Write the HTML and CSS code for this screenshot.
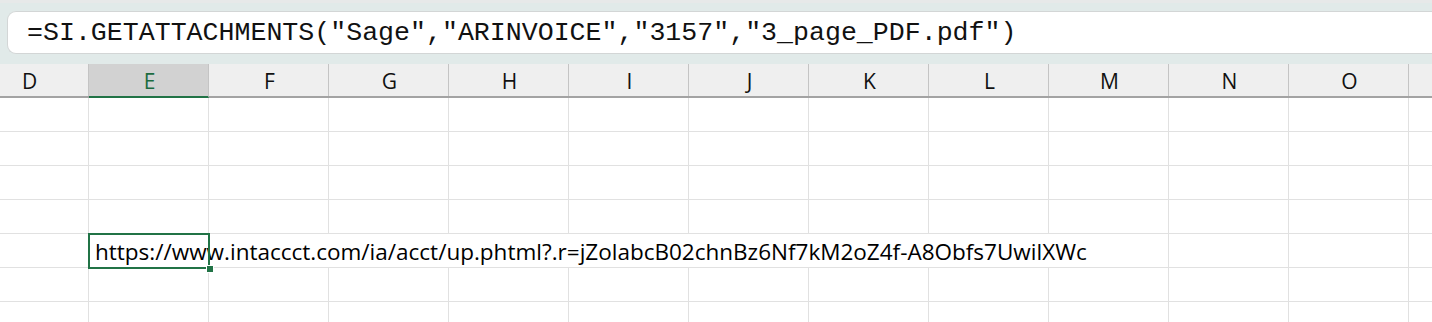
FILE: index.html
```html
<!DOCTYPE html>
<html lang="en">
<head>
  <meta charset="UTF-8" />
  <title>Sheet – SI.GETATTACHMENTS</title>
  <link rel="stylesheet" href="styles.css">
</head>
<body>

<!-- Formula bar -->
<div class="formula-bar">
  <div class="formula">=SI.GETATTACHMENTS("Sage","ARINVOICE","3157","3_page_PDF.pdf")</div>
</div>

<!-- Grid -->
<div class="sheet">
  <div class="col-heads">
    <div class="head">D</div>
    <div class="head active">E</div>
    <div class="head">F</div>
    <div class="head">G</div>
    <div class="head">H</div>
    <div class="head">I</div>
    <div class="head">J</div>
    <div class="head">K</div>
    <div class="head">L</div>
    <div class="head">M</div>
    <div class="head">N</div>
    <div class="head">O</div>
    <div class="head"></div>
  </div>

  <div class="row"><div class="cell"></div><div class="cell"></div><div class="cell"></div><div class="cell"></div><div class="cell"></div><div class="cell"></div><div class="cell"></div><div class="cell"></div><div class="cell"></div><div class="cell"></div><div class="cell"></div><div class="cell"></div><div class="cell"></div></div>
  <div class="row"><div class="cell"></div><div class="cell"></div><div class="cell"></div><div class="cell"></div><div class="cell"></div><div class="cell"></div><div class="cell"></div><div class="cell"></div><div class="cell"></div><div class="cell"></div><div class="cell"></div><div class="cell"></div><div class="cell"></div></div>
  <div class="row"><div class="cell"></div><div class="cell"></div><div class="cell"></div><div class="cell"></div><div class="cell"></div><div class="cell"></div><div class="cell"></div><div class="cell"></div><div class="cell"></div><div class="cell"></div><div class="cell"></div><div class="cell"></div><div class="cell"></div></div>
  <div class="row"><div class="cell"></div><div class="cell"></div><div class="cell"></div><div class="cell"></div><div class="cell"></div><div class="cell"></div><div class="cell"></div><div class="cell"></div><div class="cell"></div><div class="cell"></div><div class="cell"></div><div class="cell"></div><div class="cell"></div></div>

  <!-- row with the overflowing URL, E is selected -->
  <div class="row">
    <div class="cell"></div>
    <div class="cell span9">
      https://www.intaccct.com/ia/acct/up.phtml?.r=jZolabcB02chnBz6Nf7kM2oZ4f-A8Obfs7UwilXWc
      <div class="selection"><span class="handle"></span></div>
    </div>
    <div class="cell"></div><div class="cell"></div><div class="cell"></div>
  </div>

  <div class="row"><div class="cell"></div><div class="cell"></div><div class="cell"></div><div class="cell"></div><div class="cell"></div><div class="cell"></div><div class="cell"></div><div class="cell"></div><div class="cell"></div><div class="cell"></div><div class="cell"></div><div class="cell"></div><div class="cell"></div></div>
  <div class="row"><div class="cell"></div><div class="cell"></div><div class="cell"></div><div class="cell"></div><div class="cell"></div><div class="cell"></div><div class="cell"></div><div class="cell"></div><div class="cell"></div><div class="cell"></div><div class="cell"></div><div class="cell"></div><div class="cell"></div></div>
</div>

</body>
</html>
```

FILE: styles.css
```css
/* ----------  COLOURS  ---------- */
:root{
  --chrome:      #e1eae9;
  --head-bg:     #efefef;
  --head-active: #d2d2d2;
  --head-line:   #c4c4c4;
  --grid:        #e1e1e1;
  --excel-green: #217346;
  --text:        #111;
}

*{box-sizing:border-box}

body{
  margin:0;
  background:var(--chrome);
  overflow:hidden;
  font-family:'Open Sans','Noto Sans',sans-serif;
  color:var(--text);
}

/* ----------  FORMULA BAR  ---------- */
.formula-bar{
  padding:8px 0 10px 7px;
  border-top:3px solid #e7e9e9;
}
.formula{
  height:43px;
  display:flex; align-items:center;
  padding-left:19px;
  background:#fff;
  border:1px solid #d3d6d6; border-right:none;
  border-radius:9px 0 0 9px;
  font-family:'Liberation Mono',monospace;
  font-size:26.6px;
  white-space:nowrap;
}

/* ----------  GRID  ---------- */
.sheet{
  margin-left:-31px;
  background:#fff;
}

.col-heads{
  display:flex;
  height:34px;
  background:var(--head-bg);
  border-bottom:2px solid #a3a3a3;
}
.head{
  flex:0 0 120px;
  display:flex; justify-content:center; align-items:center;
  border-right:1px solid var(--head-line);
  font-size:21px;
  padding:1px 0 0 2px;
}
.head.active{
  background:var(--head-active);
  color:#1c6b40;
  margin-bottom:-2px;
  border-bottom:2px solid var(--excel-green);
}

.row{
  display:flex;
  height:34px;
}
.cell{
  flex:0 0 120px;
  border-right:1px solid var(--grid);
  border-bottom:1px solid var(--grid);
  display:flex; align-items:center;
  padding:2px 0 0 6px;
  font-size:22.5px;
  white-space:nowrap;
}
.cell.span9{
  flex-basis:1080px;
  position:relative;
  color:#000;
}

/* ----------  SELECTION  ---------- */
.selection{
  position:absolute;
  left:-1px; top:-1px;
  width:122px; height:36px;
  border:2px solid var(--excel-green);
}
.handle{
  position:absolute;
  right:-6px; bottom:-6px;
  width:8px; height:8px;
  background:var(--excel-green);
  border:1px solid #fff;
}
```
